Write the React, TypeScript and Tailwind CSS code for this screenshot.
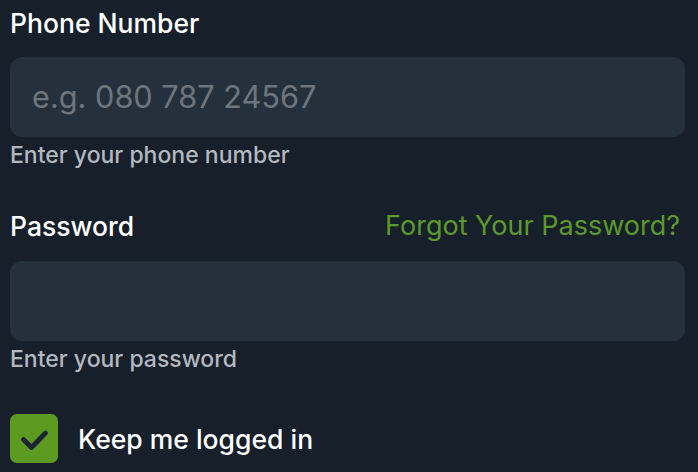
import React from "react";

export default function App() {
  return (
    <div className="min-h-[472px] w-[698px] bg-[#171f2b] pl-[10px] pr-[13px] pt-[7px] font-['Inter',sans-serif]">
      <div className="flex flex-col">
        <label className="text-[26.5px] leading-[32px] font-medium text-white">Phone Number</label>
        <div className="mt-[18px] flex h-[80px] items-center rounded-[12px] bg-[#24303b] px-[22px]">
          <span className="text-[30.7px] leading-none text-[#6e757c]">e.g. 080 787 24567</span>
        </div>
        <p className="mt-[4px] text-[23px] leading-[28px] font-medium text-[#b3b8bf]">Enter your phone number</p>
      </div>
      <div className="mt-[41px] flex flex-col">
        <div className="flex items-center justify-between">
          <label className="text-[26.5px] leading-[32px] font-medium text-white">Password</label>
          <span className="mr-[5px] text-[27px] leading-[32px] text-[#5b9a2a]">Forgot Your Password?</span>
        </div>
        <div className="mt-[19px] h-[80px] rounded-[12px] bg-[#24303b]" />
        <p className="mt-[4px] text-[23px] leading-[28px] font-medium text-[#b3b8bf]">Enter your password</p>
      </div>
      <div className="mt-[41px] flex items-center gap-[20px]">
        <div className="h-[49px] w-[48px] rounded-[7px] bg-[#5d9a22]">
          <svg width="48" height="49" viewBox="0 0 48 49" fill="none" stroke="#1b2430" strokeWidth="4.8" strokeLinecap="round" strokeLinejoin="round">
            <path d="M13.5 25.5L21.5 33.5L35.5 19" />
          </svg>
        </div>
        <span className="text-[26.5px] leading-[32px] font-medium text-white">Keep me logged in</span>
      </div>
    </div>
  );
}
